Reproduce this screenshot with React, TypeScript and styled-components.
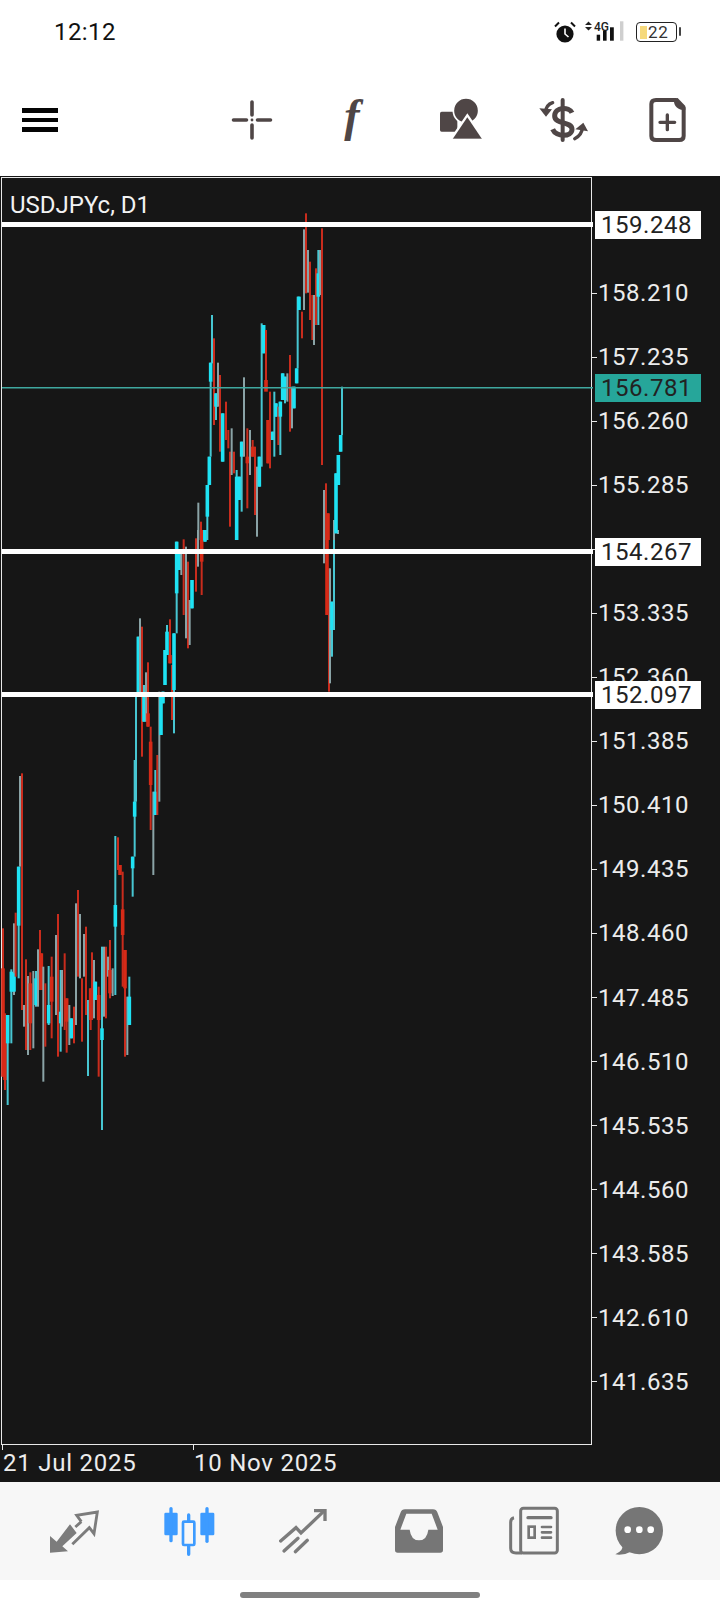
import { createGlobalStyle, styled } from "styled-components";

const GlobalStyle = createGlobalStyle`
  html, body {
    margin: 0;
    padding: 0;
    background: #ffffff;
    font-family: Roboto, "Liberation Sans", sans-serif;
  }
`;

type Tone = "c" | "g" | "r";
// x, wick top, wick bottom, body top, body bottom (0 = no body), tone
type Candle = [number, number, number, number, number, Tone];

// read off 3x crops, so each block carries its own crop origin
const LEFT_BLOCK: Candle[] = [
  [9, 505, 950, 625, 950, "r"], [15, 760, 990, 780, 960, "r"], [23, 770, 1035, 765, 850, "c"],
  [34, 628, 850, 635, 695, "c"], [42, 490, 705, 640, 695, "g"], [47, 458, 650, 0, 0, "r"],
  [56, 320, 655, 320, 497, "c"], [60, 48, 320, 0, 0, "g"], [66, 40, 750, 0, 0, "r"],
  [72, 735, 800, 0, 0, "g"], [78, 598, 870, 0, 0, "r"], [84, 648, 885, 0, 0, "g"],
  [91, 637, 870, 670, 790, "r"], [100, 633, 865, 0, 0, "g"], [108, 633, 740, 655, 735, "c"],
  [114, 568, 740, 0, 0, "g"], [120, 510, 690, 0, 0, "r"], [124, 580, 690, 580, 690, "r"],
  [130, 620, 965, 0, 0, "g"], [136, 670, 860, 0, 0, "r"], [146, 618, 795, 735, 790, "c"],
  [155, 590, 835, 650, 725, "r"], [168, 525, 765, 0, 0, "g"], [174, 462, 890, 0, 0, "r"],
  [182, 630, 875, 755, 790, "c"], [186, 630, 800, 0, 0, "g"], [194, 580, 810, 0, 0, "r"],
  [200, 715, 878, 715, 785, "r"], [208, 735, 855, 0, 0, "g"], [214, 775, 835, 775, 835, "c"],
  [222, 740, 850, 0, 0, "r"], [228, 430, 795, 0, 0, "g"], [234, 390, 650, 0, 0, "r"],
  [240, 462, 655, 0, 0, "g"], [246, 655, 845, 0, 0, "r"], [252, 522, 650, 0, 0, "g"],
  [258, 500, 765, 0, 0, "r"], [264, 720, 948, 0, 0, "c"], [272, 685, 810, 685, 780, "r"],
  [276, 577, 780, 0, 0, "r"], [282, 600, 775, 0, 0, "g"], [286, 665, 720, 665, 720, "c"],
  [296, 680, 950, 705, 780, "r"], [306, 560, 1110, 805, 840, "c"], [312, 560, 770, 0, 0, "g"],
  [318, 560, 775, 0, 0, "r"], [324, 590, 650, 0, 0, "g"], [330, 540, 715, 630, 700, "r"],
  [338, 625, 708, 0, 0, "g"], [346, 228, 705, 435, 500, "c"], [354, 232, 330, 0, 0, "r"],
  [360, 315, 345, 315, 345, "r"], [368, 335, 680, 448, 525, "r"], [375, 570, 890, 570, 685, "r"],
  [382, 710, 885, 0, 0, "g"], [388, 650, 795, 710, 795, "c"], [398, 290, 410, 290, 325, "c"],
  [404, 0, 290, 125, 170, "c"],
];

const MIDDLE_BLOCK: Candle[] = [
  [48, 500, 815, 0, 0, "c"], [55, 320, 490, 320, 490, "c"], [60, 265, 490, 0, 0, "g"],
  [66, 290, 680, 0, 0, "r"], [72, 465, 575, 500, 575, "c"], [78, 427, 575, 0, 0, "g"],
  [84, 397, 590, 550, 590, "r"], [92, 590, 900, 635, 765, "r"], [100, 785, 1035, 0, 0, "g"],
  [106, 720, 855, 785, 855, "c"], [112, 675, 855, 0, 0, "r"], [118, 485, 815, 0, 0, "g"],
  [123, 500, 615, 500, 615, "c"], [129, 485, 520, 485, 520, "c"], [135, 360, 465, 360, 465, "c"],
  [141, 285, 375, 305, 375, "c"], [150, 268, 400, 375, 400, "r"], [156, 405, 570, 0, 0, "r"],
  [162, 310, 610, 310, 480, "c"], [170, 35, 310, 35, 190, "c"], [178, 70, 120, 70, 120, "c"],
  [184, 70, 135, 0, 0, "g"], [191, 28, 255, 0, 0, "r"], [198, 50, 325, 0, 0, "g"],
  [204, 95, 355, 0, 0, "r"], [209, 210, 345, 0, 0, "g"], [216, 150, 235, 150, 235, "c"],
  [228, 25, 185, 0, 0, "r"], [234, 0, 110, 0, 0, "g"], [245, 0, 195, 0, 95, "r"],
  [255, 0, 35, 0, 35, "c"],
  // the drop and rebound on the right
  [612, 0, 100, 0, 0, "g"], [621, 0, 255, 0, 255, "r"], [627, 115, 485, 0, 0, "r"],
  [630, 115, 460, 0, 0, "g"], [636, 215, 380, 215, 300, "c"], [642, 0, 300, 0, 0, "c"],
  [654, 0, 12, 0, 0, "g"],
];

const TOP_BLOCK: Candle[] = [
  [205, 908, 1020, 0, 0, "g"], [213, 965, 1020, 0, 0, "r"], [225, 990, 1020, 990, 1020, "c"],
  [232, 855, 1020, 855, 950, "c"], [238, 770, 855, 770, 855, "c"], [242, 488, 770, 488, 545, "c"],
  [246, 345, 490, 0, 0, "c"], [252, 415, 675, 0, 0, "r"], [258, 580, 660, 580, 620, "c"],
  [264, 488, 620, 0, 0, "g"], [270, 525, 755, 0, 0, "r"], [278, 640, 785, 640, 785, "c"],
  [288, 605, 720, 0, 0, "r"], [295, 690, 745, 0, 0, "r"], [300, 755, 980, 0, 0, "r"],
  [305, 685, 825, 0, 0, "g"], [312, 755, 820, 0, 0, "r"], [320, 810, 1020, 830, 1020, "c"],
  [328, 830, 900, 830, 900, "c"], [335, 725, 935, 725, 770, "c"], [342, 532, 770, 0, 0, "g"],
  [352, 685, 925, 770, 790, "r"], [360, 690, 825, 0, 0, "g"], [368, 720, 770, 740, 770, "r"],
  [375, 740, 945, 0, 0, "r"], [381, 800, 1010, 0, 0, "g"], [388, 770, 860, 770, 860, "c"],
  [395, 370, 800, 0, 0, "c"], [401, 375, 460, 375, 460, "c"], [408, 390, 560, 540, 575, "r"],
  [414, 660, 790, 660, 790, "r"], [420, 575, 805, 0, 0, "r"], [428, 695, 720, 695, 720, "c"],
  [433, 575, 770, 0, 0, "c"], [438, 610, 650, 610, 650, "c"], [445, 620, 735, 0, 0, "r"],
  [451, 605, 765, 605, 650, "c"], [458, 520, 600, 520, 600, "c"], [465, 530, 610, 530, 600, "c"],
  [472, 520, 605, 0, 0, "g"], [480, 465, 695, 0, 0, "r"], [486, 560, 685, 0, 0, "g"],
  [492, 560, 625, 560, 625, "c"], [500, 505, 550, 505, 550, "c"], [503, 290, 505, 0, 0, "c"],
  [507, 290, 330, 290, 330, "c"], [516, 335, 415, 0, 0, "r"], [522, 88, 330, 0, 0, "g"],
  [528, 40, 280, 0, 0, "r"], [534, 150, 278, 0, 0, "g"], [540, 185, 360, 0, 0, "r"],
  [547, 285, 420, 0, 0, "r"], [552, 285, 435, 0, 0, "g"], [558, 205, 375, 0, 0, "r"],
  [565, 150, 375, 220, 290, "c"], [570, 150, 285, 0, 0, "g"], [576, 85, 795, 0, 0, "r"],
  [582, 870, 1020, 0, 0, "g"], [588, 850, 1020, 0, 0, "r"], [594, 940, 1020, 940, 1020, "r"],
  [612, 960, 1020, 0, 0, "g"], [618, 820, 1000, 820, 1000, "c"], [625, 765, 855, 765, 855, "c"],
  [632, 705, 755, 705, 755, "c"], [636, 560, 705, 0, 0, "c"],
];

const WICK_COLOR: Record<Tone, string> = { c: "#47c6d2", g: "#8aa3a6", r: "#c92c1d" };
const BODY_COLOR: Record<Tone, string> = { c: "#1fe2f3", g: "#1fe2f3", r: "#d62a17" };

function place(block: Candle[], ox: number, oy: number): Candle[] {
  return block.map(([x, a, b, c, d, tone]) => [
    ox + x / 3,
    oy + a / 3,
    oy + b / 3,
    c === 0 && d === 0 ? 0 : oy + c / 3,
    d === 0 ? 0 : oy + d / 3,
    tone,
  ]);
}

const CANDLES = [
  ...place(LEFT_BLOCK, 0, 760),
  ...place(MIDDLE_BLOCK, 120, 530),
  ...place(TOP_BLOCK, 130, 200),
];

const TICKS = [
  "158.210", "157.235", "156.260", "155.285", "154.310", "153.335",
  "152.360", "151.385", "150.410", "149.435", "148.460", "147.485",
  "146.510", "145.535", "144.560", "143.585", "142.610", "141.635",
];

const TAGS = [
  { price: "159.248", top: 35 },
  { price: "156.781", top: 198, current: true },
  { price: "154.267", top: 362 },
  { price: "152.097", top: 505 },
];

const Screen = styled.div`
  width: 720px;
  height: 1612px;
  display: flex;
  flex-direction: column;
  overflow: hidden;
  background: #ffffff;
`;

const StatusBar = styled.div`
  height: 64px;
  flex: none;
  display: flex;
  align-items: center;
  justify-content: space-between;
  padding: 0 43px 0 54px;
`;

const Clock = styled.span`
  font-size: 24px;
  color: #111111;
  letter-spacing: 0.4px;
`;

const StatusIcons = styled.div`
  display: flex;
  align-items: center;
  gap: 8px;
`;

const Battery = styled.div`
  position: relative;
  width: 41px;
  height: 20px;
  box-sizing: border-box;
  margin-left: 4px;
  border: 1.3px solid #222222;
  border-radius: 4px;
  display: flex;
  align-items: center;
  padding-left: 3px;
  gap: 1px;

  &::after {
    content: "";
    position: absolute;
    right: -5px;
    top: 4px;
    width: 2px;
    height: 9px;
    background: #444444;
    border-radius: 1px;
  }
`;

const BatteryFill = styled.span`
  width: 7px;
  height: 13px;
  background: #f6d97c;
`;

const BatteryText = styled.span`
  font-size: 17px;
  line-height: 1;
  color: #333333;
  letter-spacing: 0.6px;
`;

const Toolbar = styled.div`
  height: 112px;
  flex: none;
  display: flex;
  align-items: center;
  justify-content: space-between;
  padding-left: 22px;
`;

const Burger = styled.div`
  width: 36px;
  display: flex;
  flex-direction: column;
  gap: 5px;
`;

const BurgerBar = styled.span`
  height: 4.5px;
  background: #050505;
`;

const ToolGroup = styled.div`
  display: flex;
`;

const ToolSlot = styled.div`
  width: 104px;
  height: 60px;
  display: flex;
  align-items: center;
  justify-content: center;
`;

const FunctionGlyph = styled.span`
  font-family: "Liberation Serif", serif;
  font-style: italic;
  font-weight: 700;
  font-size: 46px;
  line-height: 52px;
  padding-bottom: 8px;
  margin-right: 8px;
  color: #4f4646;
`;

const ChartPanel = styled.div`
  position: relative;
  height: 1306px;
  flex: none;
  display: flex;
  flex-direction: column;
  background: #161616;
  color: #ececec;
`;

const ChartRow = styled.div`
  display: flex;
  height: 1269px;
  padding-top: 1px;
  box-sizing: border-box;
`;

const Plot = styled.div`
  position: relative;
  width: 591px;
  margin-left: 1px;
  flex: none;
  box-sizing: border-box;
  border: 1px solid #e8e8e8;
`;

const PlotSvg = styled.svg`
  display: block;
  overflow: visible;
`;

const Symbol = styled.span`
  position: absolute;
  left: 8px;
  top: 13px;
  font-size: 24px;
  line-height: 28px;
  color: #f2f2f2;
`;

const PriceAxis = styled.div`
  padding-top: 84px;
  display: flex;
  flex-direction: column;
`;

const TickRow = styled.div`
  height: 64.06px;
  display: flex;
  align-items: center;
  gap: 1px;
`;

const TickMark = styled.span`
  width: 5px;
  height: 1px;
  background: #e8e8e8;
`;

const TickText = styled.span`
  font-size: 24px;
  letter-spacing: 0.55px;
  line-height: 28px;
`;

const PriceTag = styled.div<{ $top: number; $current?: boolean }>`
  position: absolute;
  left: 595px;
  top: ${(p) => p.$top}px;
  width: 106px;
  height: 28px;
  padding-left: 6px;
  box-sizing: border-box;
  font-size: 24px;
  letter-spacing: 0.55px;
  line-height: 28px;
  color: #222222;
  background: ${(p) => (p.$current ? "#26a69a" : "#ffffff")};
`;

const TimeAxis = styled.div`
  height: 37px;
  display: flex;
  padding-left: 2px;
`;

const TimeCell = styled.div<{ $width: number }>`
  position: relative;
  width: ${(p) => p.$width}px;
  padding-left: 1px;
  box-sizing: border-box;
  font-size: 24px;
  letter-spacing: 0.75px;
  line-height: 37px;

  &::before {
    content: "";
    position: absolute;
    left: 0;
    top: 0;
    width: 1px;
    height: 5px;
    background: #e8e8e8;
  }
`;

const NavBar = styled.div`
  height: 98px;
  flex: none;
  display: grid;
  grid-template-columns: repeat(5, 115px) 95px;
  padding-left: 16px;
  align-items: center;
  justify-items: center;
  background: #f7f7f7;
`;

const HomeArea = styled.div`
  flex: 1;
  display: flex;
  align-items: flex-start;
  justify-content: center;
  padding-top: 12px;
`;

const HomeBar = styled.div`
  width: 240px;
  height: 6px;
  border-radius: 3px;
  background: #808080;
`;

function AlarmIcon() {
  return (
    <svg width="22" height="24" viewBox="0 0 22 24">
      <circle cx="11" cy="14" r="8.6" fill="#111" />
      <path d="M11 8.5V14l3.5 3" fill="none" stroke="#fff" strokeWidth="1.6" />
      <path d="M1 6.5 5 2.5M21 6.5 17 2.5" stroke="#111" strokeWidth="2" />
    </svg>
  );
}

function SignalIcon() {
  return (
    <svg width="40" height="22" viewBox="0 0 40 22">
      <path d="M4.500 .5 8 4H1ZM4.500 9.500 1 6H8Z" fill="#222" />
      <text x="10" y="9.700" fontFamily="Roboto, sans-serif" fontWeight="500" fontSize="12" fill="#222">
        4G
      </text>
      <rect x="12.700" y="13.700" width="3.400" height="6" fill="#111" />
      <rect x="19" y="9.700" width="3.600" height="10" fill="#111" />
      <rect x="26" y="6.300" width="3.800" height="13.400" fill="#111" />
      <rect x="36" y=".3" width="3.400" height="19.400" fill="#cfcfcf" />
    </svg>
  );
}

function CrosshairIcon() {
  return (
    <svg width="60" height="60" viewBox="0 0 60 60" stroke="#4f4646" strokeWidth="3.6" strokeLinecap="round">
      <path d="M30 12V25M30 35V48M11.500 30H24.500M35.500 30H48.500" />
      <circle cx="30" cy="30" r="1.400" fill="#4f4646" stroke="none" />
    </svg>
  );
}

function ShapesIcon() {
  return (
    <svg width="60" height="60" viewBox="0 0 180 180" fill="#4f4646">
      <rect x="30" y="65" width="52" height="60" rx="5" />
      <circle cx="108" cy="62" r="38" stroke="#fff" strokeWidth="5" />
      <path d="M112 82 158 150H66Z" stroke="#fff" strokeWidth="14" paintOrder="stroke" strokeLinejoin="miter" />
      <rect x="60" y="146" width="100" height="12" fill="#fff" />
    </svg>
  );
}

function DollarIcon() {
  return (
    <svg width="60" height="60" viewBox="314 0 180 180" fill="none" stroke="#4f4646" strokeLinecap="round">
      <path d="M400 30V150" strokeWidth="12" />
      <path
        d="M428 68C420 50 376 50 376 78 376 105 428 92 428 118 428 142 380 142 370 118"
        strokeWidth="15"
        strokeLinecap="butt"
      />
      <path d="M370 38Q350 44 348 68" strokeWidth="10" />
      <path d="M330 55 368 58 350 80Z" fill="#4f4646" stroke="none" />
      <path d="M436 146Q458 136 460 110" strokeWidth="10" />
      <path d="M476 124 438 118 462 98Z" fill="#4f4646" stroke="none" />
    </svg>
  );
}

function NewFileIcon() {
  return (
    <svg width="60" height="60" viewBox="626 0 180 180" fill="none" stroke="#4f4646">
      <path d="M680 30H738L763 55V138Q763 150 750 150H680Q666 150 666 138V42Q666 30 680 30Z" strokeWidth="12" />
      <path d="M733 26Q733 60 768 60V48L745 24Z" fill="#4f4646" stroke="none" />
      <path d="M692 97H736M714 75V119" strokeWidth="10" strokeLinecap="round" />
    </svg>
  );
}

function TradeIcon() {
  return (
    <svg width="60" height="60" viewBox="10 0 180 180">
      <path d="M28 155V105L48 122 88 70 108 96 65 136 82 151Z" fill="#7c7c7c" />
      <path
        d="M122 62 108 43 170 33 160 98 146 80 95 130M122 62 104 78"
        fill="none"
        stroke="#7c7c7c"
        strokeWidth="8.500"
      />
    </svg>
  );
}

function CandlesIcon() {
  return (
    <svg width="60" height="60" viewBox="356 0 180 180" fill="#3d9bff">
      <rect x="372" y="35" width="40" height="68" rx="4" />
      <rect x="387" y="18" width="10" height="106" rx="5" />
      <rect x="480" y="35" width="42" height="68" rx="4" />
      <rect x="495" y="18" width="10" height="108" rx="5" />
      <rect x="428" y="62" width="34" height="70" rx="3" fill="none" stroke="#3d9bff" strokeWidth="8" />
      <path d="M445 42V60M445 134V160" stroke="#3d9bff" strokeWidth="10" strokeLinecap="round" />
    </svg>
  );
}

function SignalsIcon() {
  return (
    <svg width="60" height="60" viewBox="704 0 180 180" fill="none" stroke="#7c7c7c" strokeWidth="10" strokeLinecap="round">
      <path d="M724 120 770 80 785 96 852 32" />
      <path d="M824 29H857V60" strokeLinecap="butt" />
      <path d="M734 150 776 112M768 152 804 118" />
    </svg>
  );
}

function InboxIcon() {
  return (
    <svg width="60" height="60" viewBox="10 0 180 180">
      <path
        fillRule="evenodd"
        fill="#767676"
        d="M58 25H142Q152 25 155 34L172 78V147Q172 155 164 155H36Q28 155 28 147V78L45 34Q48 25 58 25ZM62 38 44 86H72Q76 118 100 118 124 118 128 86H156L138 38Z"
      />
    </svg>
  );
}

function NewsIcon() {
  return (
    <svg width="60" height="60" viewBox="356 0 180 180" fill="none" stroke="#767676">
      <rect x="406" y="22" width="110" height="134" rx="8" strokeWidth="9" />
      <path d="M386 50Q376 52 376 64V142Q376 156 392 156H410" strokeWidth="9" />
      <path d="M428 50H497" strokeWidth="10" strokeLinecap="round" />
      <rect x="430" y="77" width="18" height="33" strokeWidth="8" />
      <path d="M470 78H497M470 94H497M470 110H497" strokeWidth="8" strokeLinecap="round" />
    </svg>
  );
}

function ChatIcon() {
  return (
    <svg width="60" height="60" viewBox="671 0 180 180">
      <ellipse cx="762" cy="89" rx="71" ry="71" fill="#767676" />
      <path d="M712 130Q716 148 690 160 716 164 742 150Z" fill="#767676" />
      <circle cx="727" cy="86" r="10" fill="#fff" />
      <circle cx="762" cy="86" r="10" fill="#fff" />
      <circle cx="796" cy="86" r="10" fill="#fff" />
    </svg>
  );
}

function CandleChart() {
  return (
    <PlotSvg width="589" height="1266" viewBox="2 178 589 1266">
      {CANDLES.map(([x, top, bottom, bodyTop, bodyBottom, tone], i) => (
        <g key={i}>
          <rect x={x - 1} y={top} width="2" height={bottom - top} fill={WICK_COLOR[tone]} />
          {bodyBottom > 0 && (
            <rect x={x - 1.8} y={bodyTop} width="3.6" height={bodyBottom - bodyTop} fill={BODY_COLOR[tone]} />
          )}
        </g>
      ))}
      <rect x="2" y="222" width="591" height="5" fill="#fff" />
      <rect x="2" y="549" width="591" height="5" fill="#fff" />
      <rect x="2" y="692" width="591" height="5" fill="#fff" />
      <rect x="2" y="387" width="591" height="1.5" fill="#3fa89f" />
    </PlotSvg>
  );
}

export default function App() {
  return (
    <Screen>
      <GlobalStyle />
      <StatusBar>
        <Clock>12:12</Clock>
        <StatusIcons>
          <AlarmIcon />
          <SignalIcon />
          <Battery>
            <BatteryFill />
            <BatteryText>22</BatteryText>
          </Battery>
        </StatusIcons>
      </StatusBar>

      <Toolbar>
        <Burger>
          <BurgerBar />
          <BurgerBar />
          <BurgerBar />
        </Burger>
        <ToolGroup>
          <ToolSlot><CrosshairIcon /></ToolSlot>
          <ToolSlot><FunctionGlyph>f</FunctionGlyph></ToolSlot>
          <ToolSlot><ShapesIcon /></ToolSlot>
          <ToolSlot><DollarIcon /></ToolSlot>
          <ToolSlot><NewFileIcon /></ToolSlot>
        </ToolGroup>
      </Toolbar>

      <ChartPanel>
        <ChartRow>
          <Plot>
            <CandleChart />
            <Symbol>USDJPYc, D1</Symbol>
          </Plot>
          <PriceAxis>
            {TICKS.map((tick) => (
              <TickRow key={tick}>
                <TickMark />
                <TickText>{tick}</TickText>
              </TickRow>
            ))}
          </PriceAxis>
        </ChartRow>
        <TimeAxis>
          <TimeCell $width={191}>21 Jul 2025</TimeCell>
          <TimeCell $width={191}>10 Nov 2025</TimeCell>
        </TimeAxis>
        {TAGS.map((tag) => (
          <PriceTag key={tag.price} $top={tag.top} $current={tag.current}>
            {tag.price}
          </PriceTag>
        ))}
      </ChartPanel>

      <NavBar>
        <TradeIcon />
        <CandlesIcon />
        <SignalsIcon />
        <InboxIcon />
        <NewsIcon />
        <ChatIcon />
      </NavBar>

      <HomeArea>
        <HomeBar />
      </HomeArea>
    </Screen>
  );
}
